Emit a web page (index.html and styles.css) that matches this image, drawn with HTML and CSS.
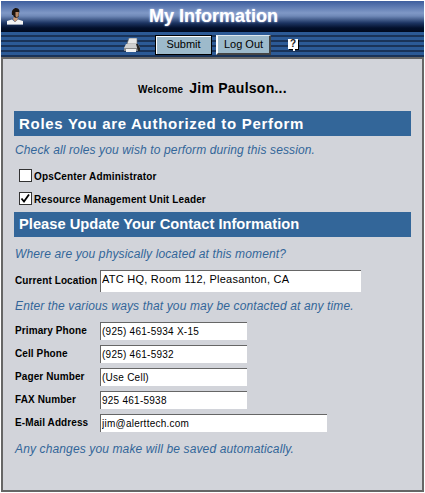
FILE: index.html
```html
<!DOCTYPE html>
<html lang="en">
<head>
    <meta charset="UTF-8">
    <meta name="viewport" content="width=device-width, initial-scale=1.0">
    <title>My Information</title>
    <link rel="stylesheet" href="styles.css">
</head>
<body>
    <div class="page">
        <div class="title-bar">
            <svg class="user-icon" width="18" height="18" viewBox="0 0 18 18">
                <path d="M1 13 L6 11.500 L9 14 L12 11.500 L17 13 L17 17 L1 17 Z" fill="#f4f4f4"/>
                <path d="M1 17 L17 17 L17 16 L1 16 Z" fill="#9aa4b8"/>
                <path d="M7 11 L9 14 L12 11 L11 9 L8 9 Z" fill="#c89a78"/>
                <path d="M6 7 C5 2 8 0 10 0 C13 0 14 3 13 5 L12.500 9 L10 10 L8 9 L7 7 Z" fill="#1c1410"/>
                <path d="M9.500 4 L12.800 4 L12.500 8 L10.500 9.500 L9.500 8 Z" fill="#b98a68"/>
            </svg>
            <h1>My Information</h1>
        </div>

        <div class="tool-bar">
            <svg class="print-icon" width="16" height="14" viewBox="0 0 16 14">
                <path d="M5 0 L13 0 L13 6 L3 6 Z" fill="#e8e8e8" stroke="#666" stroke-width="0.6"/>
                <path d="M2 6 L14 6 L16 10 L0 10 Z" fill="#cfcfcf"/>
                <path d="M0 10 L16 10 L16 13 L0 13 Z" fill="#8a8a8a"/>
                <path d="M12 6 L14 6 L16 10 L16 13 L14 13 Z" fill="#222"/>
                <path d="M2 11 L12 11 L12 14 L2 14 Z" fill="#f2f2f2"/>
            </svg>
            <button class="btn btn-pressed">Submit</button>
            <button class="btn btn-logout">Log Out</button>
            <span class="help-icon">?</span>
        </div>

        <div class="content">
            <p class="welcome"><span class="welcome-small">Welcome</span><span class="welcome-name">Jim Paulson...</span></p>

            <h2 class="section-bar section-roles">Roles You are Authorized to Perform</h2>
            <p class="hint hint-roles">Check all roles you wish to perform during this session.</p>
            <label class="role role-first"><span class="check-box"></span>OpsCenter Administrator</label>
            <label class="role"><span class="check-box">
                <svg width="11" height="11" viewBox="0 0 11 11"><path d="M1.500 5.500 L4 8.500 L9 1.500" fill="none" stroke="#000" stroke-width="1.800"/></svg>
            </span>Resource Management Unit Leader</label>

            <h2 class="section-bar section-contact">Please Update Your Contact Information</h2>
            <p class="hint hint-where">Where are you physically located at this moment?</p>
            <div class="field field-location">
                <label for="location">Current Location</label>
                <input type="text" id="location" class="input-location" value="ATC HQ, Room 112, Pleasanton, CA">
            </div>
            <p class="hint hint-ways">Enter the various ways that you may be contacted at any time.</p>
            <div class="field field-first">
                <label for="primary">Primary Phone</label>
                <input type="text" id="primary" value="(925) 461-5934 X-15">
            </div>
            <div class="field">
                <label for="cell">Cell Phone</label>
                <input type="text" id="cell" value="(925) 461-5932">
            </div>
            <div class="field">
                <label for="pager">Pager Number</label>
                <input type="text" id="pager" value="(Use Cell)">
            </div>
            <div class="field">
                <label for="fax">FAX Number</label>
                <input type="text" id="fax" value="925 461-5938">
            </div>
            <div class="field">
                <label for="email">E-Mail Address</label>
                <input type="text" id="email" class="input-email" value="jim@alerttech.com">
            </div>
            <p class="hint hint-saved">Any changes you make will be saved automatically.</p>
        </div>
    </div>
</body>
</html>
```

FILE: styles.css
```css
html, body {
    margin: 0;
    padding: 0;
    background-color: #fff;
}
body {
    font-family: "Liberation Sans", Arial, sans-serif;
    color: #000;
}
.page {
    width: 423px;
    height: 491px;
    margin: 1px;
    display: flex;
    flex-direction: column;
}
.title-bar {
    height: 31px;
    display: flex;
    align-items: center;
    justify-content: center;
    position: relative;
    background: linear-gradient(#3d5e9e 0, #7f98c6 12px, #6f89b8 15px, #1c3462 22px, #03102c 27px, #000a20 31px);
}
.title-bar h1 {
    margin: 0 0 0 2px;
    font-size: 18px;
    font-weight: bold;
    color: #fff;
    text-shadow: 0 0 2px #c8d8f8;
}
.user-icon {
    position: absolute;
    left: 5px;
    top: 7px;
}
.tool-bar {
    height: 25px;
    box-sizing: border-box;
    padding-left: 123px;
    display: flex;
    align-items: center;
    gap: 4px;
    background: repeating-linear-gradient(#2c5a96 0, #2c5a96 3px, #1a3358 3px, #1a3358 5px);
}
.print-icon {
    margin-right: 11px;
}
.btn {
    width: 57px;
    height: 20px;
    padding: 0;
    font-family: "Liberation Sans", Arial, sans-serif;
    font-size: 11px;
    color: #000;
    background-color: #9dbacb;
    border: 1px solid;
    border-color: #fff #444 #444 #fff;
}
.btn-logout {
    width: 55px;
    border-width: 1px 2px 2px 2px;
    border-color: #dfe8ee #444 #444 #fff;
}
.btn-pressed {
    padding-bottom: 2px;
    border-color: #000;
    box-shadow: inset 1px 1px 0 #fff;
}
.help-icon {
    position: relative;
    width: 10px;
    height: 10px;
    margin-left: 13px;
    margin-bottom: 2px;
    background-color: #fff;
    color: #222;
    font-size: 10px;
    font-weight: bold;
    line-height: 10px;
    text-align: center;
    box-shadow: 1px 1px 0 #000;
}
.help-icon::after {
    content: "";
    position: absolute;
    left: 5px;
    top: 10px;
    width: 2px;
    height: 2px;
    background-color: #fff;
}
.content {
    flex: 1;
    border: 2px solid #666;
    background-color: #d2d4da;
    padding: 0 11px;
}
.welcome {
    margin: 20px 0 0;
    height: 32px;
    text-align: center;
    font-weight: bold;
}
.welcome-small {
    font-size: 10px;
    letter-spacing: 0.2px;
    margin-right: 6px;
}
.welcome-name {
    font-size: 14px;
    letter-spacing: 0.25px;
}
.section-bar {
    margin: 0;
    height: 25px;
    line-height: 25px;
    padding-left: 5px;
    background-color: #336699;
    color: #fff;
    font-size: 15px;
}
.section-roles {
    letter-spacing: 0.7px;
}
.section-contact {
    margin-top: 2px;
    font-size: 14.7px;
}
.hint {
    margin: 0;
    padding-left: 1px;
    height: 14px;
    line-height: 14px;
    color: #336699;
    font-size: 12px;
    font-style: italic;
    letter-spacing: 0.13px;
}
.hint-roles {
    margin-top: 7px;
}
.hint-where {
    margin-top: 10px;
}
.hint-ways {
    margin-top: 7px;
}
.hint-saved {
    margin-top: 8px;
}
.role {
    display: flex;
    align-items: center;
    gap: 2px;
    height: 23px;
    box-sizing: border-box;
    padding: 2px 0 0 5px;
    font-size: 10px;
    font-weight: bold;
    letter-spacing: 0.15px;
}
.role-first {
    margin-top: 7px;
}
.check-box {
    width: 11px;
    height: 11px;
    margin-bottom: 3px;
    background-color: #fff;
    border: 1px solid #333;
    display: flex;
}
.field {
    display: flex;
    align-items: center;
    height: 23px;
    font-size: 10px;
    font-weight: bold;
    letter-spacing: 0.1px;
}
.field-location {
    margin-top: 8px;
}
.field-first {
    margin-top: 6px;
}
.field label {
    width: 85px;
    padding-left: 1px;
}
.field input {
    width: 147px;
    height: 18px;
    box-sizing: border-box;
    padding: 0 1px;
    font-family: "Liberation Sans", Arial, sans-serif;
    font-size: 10px;
    letter-spacing: 0.25px;
    color: #000;
    background-color: #fff;
    border: 0;
    border-top: 1px solid #666;
    border-left: 1px solid #666;
}
.field input.input-location {
    width: 261px;
    height: 22px;
    padding-bottom: 5px;
    font-size: 11px;
}
.field input.input-email {
    width: 227px;
}
```
